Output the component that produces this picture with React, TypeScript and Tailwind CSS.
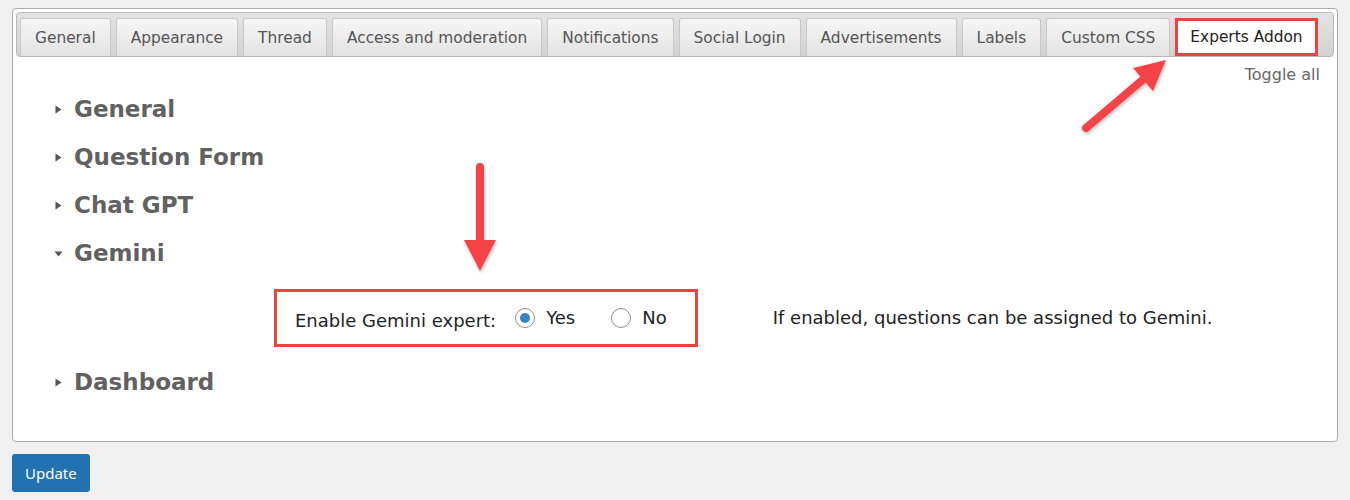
const tabs = [
  'General',
  'Appearance',
  'Thread',
  'Access and moderation',
  'Notifications',
  'Social Login',
  'Advertisements',
  'Labels',
  'Custom CSS',
]

const sections = ['General', 'Question Form', 'Chat GPT']

function Caret({ open }: { open?: boolean }) {
  return (
    <svg width="9" height="9" viewBox="0 0 9 9" className="shrink-0">
      {open ? <polygon points="0.5,2.5 8.5,2.5 4.5,7.5" fill="#555" /> : <polygon points="1.5,0.5 7.5,4.5 1.5,8.5" fill="#555" />}
    </svg>
  )
}

function Radio({ checked }: { checked?: boolean }) {
  return (
    <span className="w-[20px] h-[20px] rounded-full border border-[#8c8f94] bg-white flex items-center justify-center">
      {checked && <span className="w-[10px] h-[10px] rounded-full bg-[#3582c4]" />}
    </span>
  )
}

function Arrows() {
  return (
    <svg width="1350" height="500" className="absolute top-0 left-0 pointer-events-none">
      <defs>
        <filter id="sh" x="-50%" y="-50%" width="200%" height="200%">
          <feDropShadow dx="1" dy="2" stdDeviation="1.5" floodColor="#000" floodOpacity="0.25" />
        </filter>
      </defs>
      <g filter="url(#sh)" fill="#f44246" stroke="#f44246">
        <line x1="480" y1="167" x2="480" y2="244" strokeWidth="8" strokeLinecap="round" />
        <polygon points="464,240 496,240 480,271" stroke="none" />
        <line x1="1086" y1="128" x2="1146" y2="77" strokeWidth="8" strokeLinecap="round" />
        <polygon points="1166,60 1153,91 1133,68" stroke="none" />
      </g>
    </svg>
  )
}

export default function App() {
  return (
    <div className="relative w-[1350px] h-[500px] bg-[#f0f0f0] pt-[8px] px-[12px] font-['DejaVu_Sans',Verdana,sans-serif] overflow-hidden">
      <div className="w-[1326px] h-[434px] bg-white border border-[#aaa] rounded-[4px] p-[3px] flex flex-col">
        <div className="h-[45px] border border-[#b8b8b8] rounded-[4px] bg-gradient-to-b from-[#e4e4e4] to-[#d2d2d2] pt-[5px] pl-[3px] flex items-end gap-[5px]">
          {tabs.map((t) => (
            <div
              key={t}
              className="h-[38px] px-[14px] pt-[2px] flex items-center text-[15.4px] text-[#555] border border-b-0 border-[#c8c8c8] rounded-t-[3px] bg-gradient-to-b from-[#f5f5f5] via-[#ededed] to-[#e2e2e2]"
            >
              {t}
            </div>
          ))}
          <div className="h-[38px] px-[12px] pt-[2px] flex items-center text-[15.4px] text-[#222] bg-white border-[3px] border-[#f04141]">
            Experts Addon
          </div>
        </div>

        <div className="flex justify-end pr-[14px] mt-[8px] text-[16px] leading-[20px] text-[#666]">Toggle all</div>

        <div className="flex flex-col">
          {sections.map((s) => (
            <div key={s} className="h-[48px] flex items-center pl-[38px] gap-[11px]">
              <Caret />
              <span className="text-[23px] font-bold text-[#616161]">{s}</span>
            </div>
          ))}
          <div className="h-[48px] flex items-center pl-[38px] gap-[11px]">
            <Caret open />
            <span className="text-[23px] font-bold text-[#616161]">Gemini</span>
          </div>

          <div className="h-[81px] flex items-center pl-[258px]">
            <div className="h-[58px] border-[3px] border-[#f04141] flex items-center pl-[18px] pr-[28px] text-[18px] text-[#1d2327]">
              <span className="mt-[5px]">Enable Gemini expert:</span>
              <span className="flex items-center gap-[11px] ml-[19px]">
                <Radio checked />
                <span>Yes</span>
              </span>
              <span className="flex items-center gap-[11px] ml-[36px]">
                <Radio />
                <span>No</span>
              </span>
            </div>
            <div className="ml-[75px] text-[18px] text-[#222]">If enabled, questions can be assigned to Gemini.</div>
          </div>

          <div className="h-[48px] flex items-center pl-[38px] gap-[11px]">
            <Caret />
            <span className="text-[23px] font-bold text-[#616161]">Dashboard</span>
          </div>
        </div>
      </div>

      <button className="mt-[12px] h-[38px] px-[13px] bg-[#2271b1] text-white text-[15px] rounded-[3px] font-['Noto_Sans',sans-serif]">
        Update
      </button>

      <Arrows />
    </div>
  )
}
